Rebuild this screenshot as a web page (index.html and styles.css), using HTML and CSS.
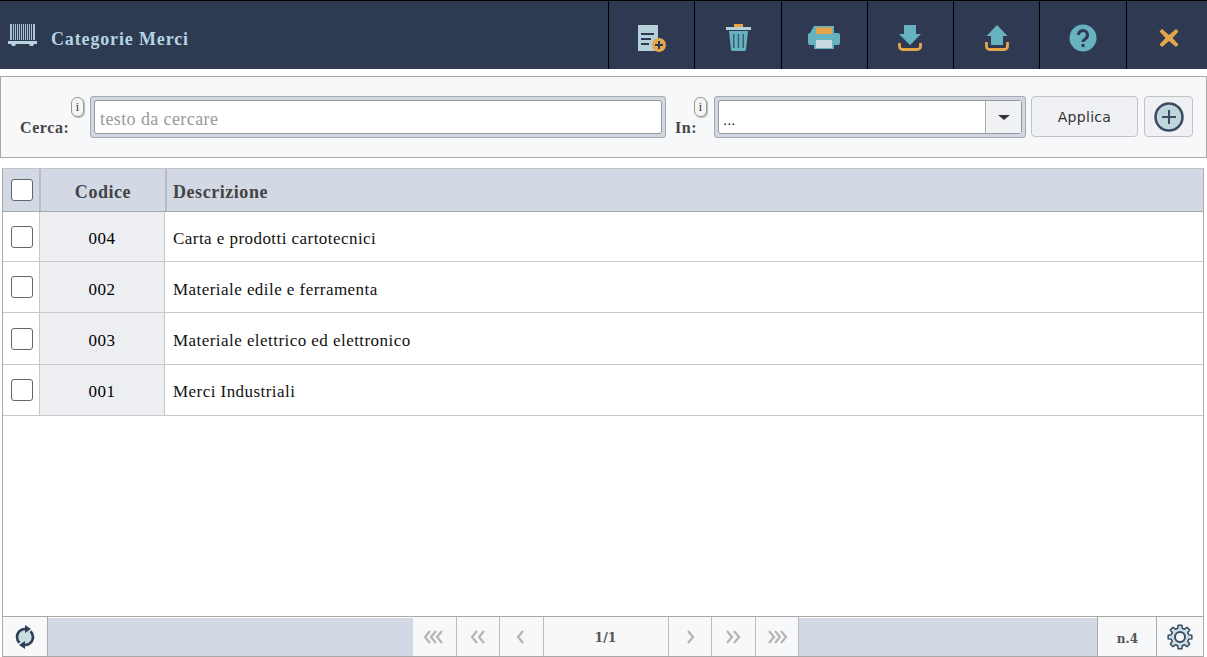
FILE: index.html
```html
<!DOCTYPE html>
<html lang="it">
<head>
<meta charset="utf-8">
<title>Categorie Merci</title>
<link rel="stylesheet" href="styles.css">
</head>
<body>
<div class="app">
  <header class="topbar">
    <div class="brand">
      <svg class="brand-icon" width="30" height="24" viewBox="0 0 30 24">
        <g fill="#a9c4d4"><rect x="2" y="0" width="2" height="16"/><rect x="5" y="0" width="1" height="16"/><rect x="7" y="0" width="1" height="16"/><rect x="9" y="0" width="1" height="16"/><rect x="11" y="0" width="1" height="16"/><rect x="13" y="0" width="1" height="16"/><rect x="15" y="0" width="1" height="16"/><rect x="17" y="0" width="1" height="16"/><rect x="19" y="0" width="1" height="16"/><rect x="21" y="0" width="1" height="16"/><rect x="23" y="0" width="1" height="16"/><rect x="25" y="0" width="2" height="16"/></g>
        <path d="M0 17h29v3h-3l-1 2h-3l-1-2H8l-1 2H4l-1-2H0z" fill="#b9d3e0"/>
      </svg>
      <span class="brand-title">Categorie Merci</span>
    </div>
    <nav class="tools">
      <button class="tool"><svg width="32" height="30" viewBox="0 0 32 30"><path d="M2 2h20v17a8 8 0 0 0-3 9H2z" fill="#b5d0d8"/><g fill="#2f3a52"><rect x="5" y="10" width="13" height="2"/><rect x="5" y="15" width="10" height="2"/><rect x="5" y="20" width="8" height="2"/></g><circle cx="23" cy="22" r="7" fill="#e5a64a"/><path d="M19 21h3v-3h2v3h3v2h-3v3h-2v-3h-3z" fill="#2f3a52"/></svg></button>
      <button class="tool"><svg width="30" height="30" viewBox="0 0 30 30"><rect x="11" y="1" width="9" height="3" fill="#e5a64a"/><rect x="3" y="4" width="25" height="3" fill="#b5d0d8"/><path d="M6 8h19l-2 19a2 2 0 0 1-2 1H10a2 2 0 0 1-2-1z" fill="#66b2bf"/><g fill="#2f3a52" opacity=".7"><rect x="10" y="11" width="1.5" height="14"/><rect x="14.7" y="11" width="1.5" height="14"/><rect x="19.5" y="11" width="1.5" height="14"/></g></svg></button>
      <button class="tool"><svg width="32" height="30" viewBox="0 0 32 30"><path d="M6 3h20v7h4a2 2 0 0 1 2 2v8a2 2 0 0 1-2 2h-4v4H6v-4H2a2 2 0 0 1-2-2v-8a2 2 0 0 1 2-2z" fill="#66b2bf"/><rect x="8" y="4.500" width="16" height="6.500" fill="#e5a64a"/><rect x="8" y="17" width="16" height="8" fill="#c7dbe1"/></svg></button>
      <button class="tool"><svg width="24" height="26" viewBox="0 0 24 26"><path d="M6 0h12v9h5L12 20 1 9h5z" fill="#66b2bf"/><path d="M1.500 18v3.500a3 3 0 0 0 3 3h15a3 3 0 0 0 3-3V18" fill="none" stroke="#e5a64a" stroke-width="2.800"/></svg></button>
      <button class="tool"><svg width="24" height="26" viewBox="0 0 24 26"><path d="M12 0l10.500 11H18v9H6v-9H1.500z" fill="#66b2bf"/><path d="M1.500 17v4.500a3 3 0 0 0 3 3h15a3 3 0 0 0 3-3V17" fill="none" stroke="#e5a64a" stroke-width="2.800"/></svg></button>
      <button class="tool"><svg width="28" height="28" viewBox="0 0 28 28"><circle cx="14" cy="14" r="13.500" fill="#66b2bf"/><path d="M9.500 11a4.500 4.500 0 1 1 7 3.700c-1.500 1-2.500 1.700-2.500 3.300" fill="none" stroke="#2f3a52" stroke-width="3"/><rect x="12.500" y="20" width="3" height="3" fill="#2f3a52"/></svg></button>
      <button class="tool"><svg width="20" height="20" viewBox="0 0 20 20"><path d="M3 1l7 6 7-6 2.500 2.500-6 6.500 6 6.500L17 19l-7-6-7 6-2.500-2.500 6-6.500-6-6.500z" fill="#e5a64a"/></svg></button>
    </nav>
  </header>

  <section class="search">
    <div class="field-label"><span class="info">i</span><label>Cerca:</label></div>
    <div class="frame frame-text"><input class="text-input" placeholder="testo da cercare"></div>
    <div class="field-label field-label-in"><span class="info">i</span><label>In:</label></div>
    <div class="frame frame-select"><div class="select"><span class="select-value">...</span><span class="select-btn"><i class="caret"></i></span></div></div>
    <button class="apply">Applica</button>
    <button class="add"><svg width="32" height="32" viewBox="0 0 32 32"><circle cx="16" cy="16" r="13.500" fill="#bfd7dc" stroke="#3d4a62" stroke-width="2.500"/><path d="M15 9h2v6h6v2h-6v6h-2v-6H9v-2h6z" fill="#3d4a62"/></svg></button>
  </section>

  <section class="grid">
    <div class="row head">
      <div class="c-check"><span class="box"></span></div>
      <div class="c-code">Codice</div>
      <div class="c-desc">Descrizione</div>
    </div>
    <div class="row item"><div class="c-check"><span class="box"></span></div><div class="c-code">004</div><div class="c-desc">Carta e prodotti cartotecnici</div></div>
    <div class="row item"><div class="c-check"><span class="box"></span></div><div class="c-code">002</div><div class="c-desc">Materiale edile e ferramenta</div></div>
    <div class="row item"><div class="c-check"><span class="box"></span></div><div class="c-code">003</div><div class="c-desc">Materiale elettrico ed elettronico</div></div>
    <div class="row item"><div class="c-check"><span class="box"></span></div><div class="c-code">001</div><div class="c-desc">Merci Industriali</div></div>
    <div class="spacer"></div>
    <footer class="pager">
      <div class="pbtn refresh"><svg width="22" height="24" viewBox="0 0 22 24"><circle cx="11" cy="12" r="8" fill="#c9dfe3"/><path d="M12 4a8 8 0 0 0-9 8 8 8 0 0 0 2.500 5.800M10 20a8 8 0 0 0 9-8 8 8 0 0 0-2.500-5.800" fill="none" stroke="#323e55" stroke-width="2.600"/><path d="M11 0l6 4-6 4zM11 16l-6 4 6 4z" fill="#323e55"/></svg></div>
      <div class="fill fill-left"></div>
      <div class="nav nav-left"><svg width="22" height="14" viewBox="0 0 22 14"><path d="M7 1L2 7l5 6M13 1L8 7l5 6M19 1l-5 6 5 6"/></svg></div>
      <div class="nav nav-left"><svg width="16" height="14" viewBox="0 0 16 14"><path d="M7 1L2 7l5 6M14 1L9 7l5 6"/></svg></div>
      <div class="nav nav-left"><svg width="10" height="14" viewBox="0 0 10 14"><path d="M7 1L2 7l5 6"/></svg></div>
      <div class="page">1/1</div>
      <div class="nav"><svg width="10" height="14" viewBox="0 0 10 14"><path d="M3 1l5 6-5 6"/></svg></div>
      <div class="nav"><svg width="16" height="14" viewBox="0 0 16 14"><path d="M2 1l5 6-5 6M9 1l5 6-5 6"/></svg></div>
      <div class="nav"><svg width="22" height="14" viewBox="0 0 22 14"><path d="M3 1l5 6-5 6M9 1l5 6-5 6M15 1l5 6-5 6"/></svg></div>
      <div class="fill fill-right"></div>
      <div class="count">n.4</div>
      <div class="pbtn gear"><svg width="26" height="26" viewBox="0 0 26 26"><g transform="translate(13 13)"><polygon points="-2.33,-8.69 -1.88,-11.85 1.88,-11.85 2.33,-8.69 4.5,-7.79 7.05,-9.71 9.71,-7.05 7.79,-4.5 8.69,-2.33 11.85,-1.88 11.85,1.88 8.69,2.33 7.79,4.5 9.71,7.05 7.05,9.71 4.5,7.79 2.33,8.69 1.88,11.85 -1.88,11.85 -2.33,8.69 -4.5,7.79 -7.05,9.71 -9.71,7.05 -7.79,4.5 -8.69,2.33 -11.85,1.88 -11.85,-1.88 -8.69,-2.33 -7.79,-4.5 -9.71,-7.05 -7.05,-9.71 -4.5,-7.79" fill="#c9dfe3" stroke="#3d4a62" stroke-width="1.500" stroke-linejoin="round"/><circle r="5" fill="#f7f8fa" stroke="#3d4a62" stroke-width="2"/></g></svg></div>
    </footer>
  </section>
</div>
</body>
</html>
```
FILE: styles.css
```css
* { box-sizing: border-box; }
html, body { margin: 0; padding: 0; background: #fff; overflow: hidden; }
body { font-family: "Liberation Serif", serif; color: #000; }
button { font: inherit; margin: 0; cursor: pointer; }
.app { width: 1207px; height: 657px; display: flex; flex-direction: column; overflow: hidden; }

.topbar { height: 69px; flex: none; background: #2e3a50; border-top: 1px solid #000; display: flex; justify-content: space-between; }
.brand { display: flex; align-items: center; padding-left: 8px; }
.brand-icon { margin-top: 2px; }
.brand-title { margin-left: 13px; padding-top: 9px; font-size: 18px; letter-spacing: .85px; font-weight: bold; color: #b3d4e2; }
.tools { display: flex; margin-right: -5px; }
.tool { width: 86.3px; height: 68px; padding: 6px 0 0; border: 0; border-left: 1px solid #000; background: #2f3a52; display: flex; align-items: center; justify-content: center; }

.search { height: 82px; margin-top: 7px; flex: none; background: #f7f8fa; border: 1px solid #a8a8a8; display: flex; align-items: flex-start; }
.field-label { position: relative; width: 89px; height: 100%; flex: none; }
.field-label label { position: absolute; left: 19px; top: 42px; font-size: 16px; letter-spacing: .6px; font-weight: bold; color: #444; }
.info { position: absolute; left: 70px; top: 20px; width: 13px; height: 20px; border: 1px solid #999; border-radius: 6px; background: #f5f5f5; box-shadow: 1px 1px 1px #bbb; font-size: 12px; line-height: 18px; text-align: center; color: #333; }
.frame { margin-top: 19px; height: 42px; padding: 3px; background: #d0d6e2; border: 1px solid #a8aab0; border-radius: 3px; flex: none; }
.frame-text { width: 576px; }
.text-input { width: 100%; height: 34px; border: 1px solid #999; border-radius: 3px; padding: 4px 4px 0 5px; background: #fff; font: 18px "Liberation Serif", serif; letter-spacing: .4px; outline: 0; }
.text-input::placeholder { color: #999; opacity: 1; }
.field-label-in { width: 48px; }
.field-label-in label { left: 9px; }
.field-label-in .info { left: 28px; }
.frame-select { width: 312px; }
.select { height: 34px; background: #fff; border: 1px solid #999; border-radius: 3px; display: flex; }
.select-value { flex: 1; padding: 12px 0 0 4px; font: 13px "DejaVu Sans", sans-serif; }
.select-btn { width: 36px; background: #f0f1f4; border-left: 1px solid #aaa; display: flex; align-items: center; justify-content: center; }
.caret { width: 0; height: 0; border: 6px solid transparent; border-top: 5px solid #333; border-bottom: 0; }
.apply { margin: 19px 0 0 5px; width: 107px; height: 41px; background: #f0f1f4; border: 1px solid #c0c2c6; border-radius: 4px; font: 14px "DejaVu Sans", sans-serif; color: #333; letter-spacing: .3px; }
.add { margin: 19px 0 0 6px; width: 49px; height: 41px; padding: 0; background: #f0f1f4; border: 1px solid #c0c2c6; border-radius: 4px; display: flex; align-items: center; justify-content: center; }

.grid { flex: 1; margin: 10px 3px 0 2px; display: flex; flex-direction: column; border: 1px solid #aaa; border-top: 1px solid #c4c4c4; border-bottom: 0; min-height: 0; }
.row { display: flex; flex: none; }
.head { height: 42.67px; background: #d2d9e4; border-bottom: 1px solid #a8a8a8; font-weight: bold; font-size: 18px; letter-spacing: .55px; color: #444; }
.item { height: 51.33px; border-bottom: 1px solid #c8c8c8; font-size: 17px; letter-spacing: .45px; }
.head + .item { height: 50.33px; }
.c-check { width: 37px; flex: none; display: flex; justify-content: center; padding-left: 1px; padding-top: 14.5px; border-right: 1px solid #c8c8c8; }
.head .c-check { padding-top: 10px; border-right: 2px solid #b8bcc2; width: 38px; }
.box { width: 22px; height: 22px; border: 1px solid #666; border-radius: 3px; background: #fff; }
.c-code { width: 125px; flex: none; display: flex; align-items: center; justify-content: center; background: #eceef2; border-right: 1px solid #c8c8c8; padding-top: 5px; }
.head .c-code { background: transparent; width: 126px; border-right: 2px solid #b8bcc2; padding-top: 5px; }
.c-desc { flex: 1; display: flex; align-items: center; padding-left: 8px; padding-top: 5px; }
.head .c-desc { padding-left: 6px; padding-top: 5px; }
.item .c-desc { color: #111; }
.spacer { flex: 1; }

.pager { height: 41px; flex: none; border-top: 1px solid #a8a8a8; border-bottom: 1px solid #a8a8a8; display: flex; background: #f7f8fa; }
.pbtn { display: flex; align-items: center; justify-content: center; flex: none; }
.refresh { width: 45px; border-right: 1px solid #aaa; }
.fill { background: #d2d9e4; border-top: 1px solid #fff; }
.fill-left { width: 365px; }
.fill-right { width: 298px; }
.nav { width: 43.67px; flex: none; display: flex; align-items: center; justify-content: center; border-right: 1px solid #bbb; }
.nav svg { fill: none; stroke: #b4b4b4; stroke-width: 2.2; }
.nav-left { width: 43.5px; }
.page { width: 125px; flex: none; display: flex; align-items: center; justify-content: center; padding-top: 2px; border-right: 1px solid #bbb; font: bold 12.5px "DejaVu Serif", serif; color: #555; }
.count { width: 60px; flex: none; display: flex; align-items: center; justify-content: center; padding-top: 4px; border-left: 1px solid #aaa; border-right: 1px solid #aaa; font: bold 12px "DejaVu Serif", serif; color: #555; }
.gear { width: 45px; }
```
